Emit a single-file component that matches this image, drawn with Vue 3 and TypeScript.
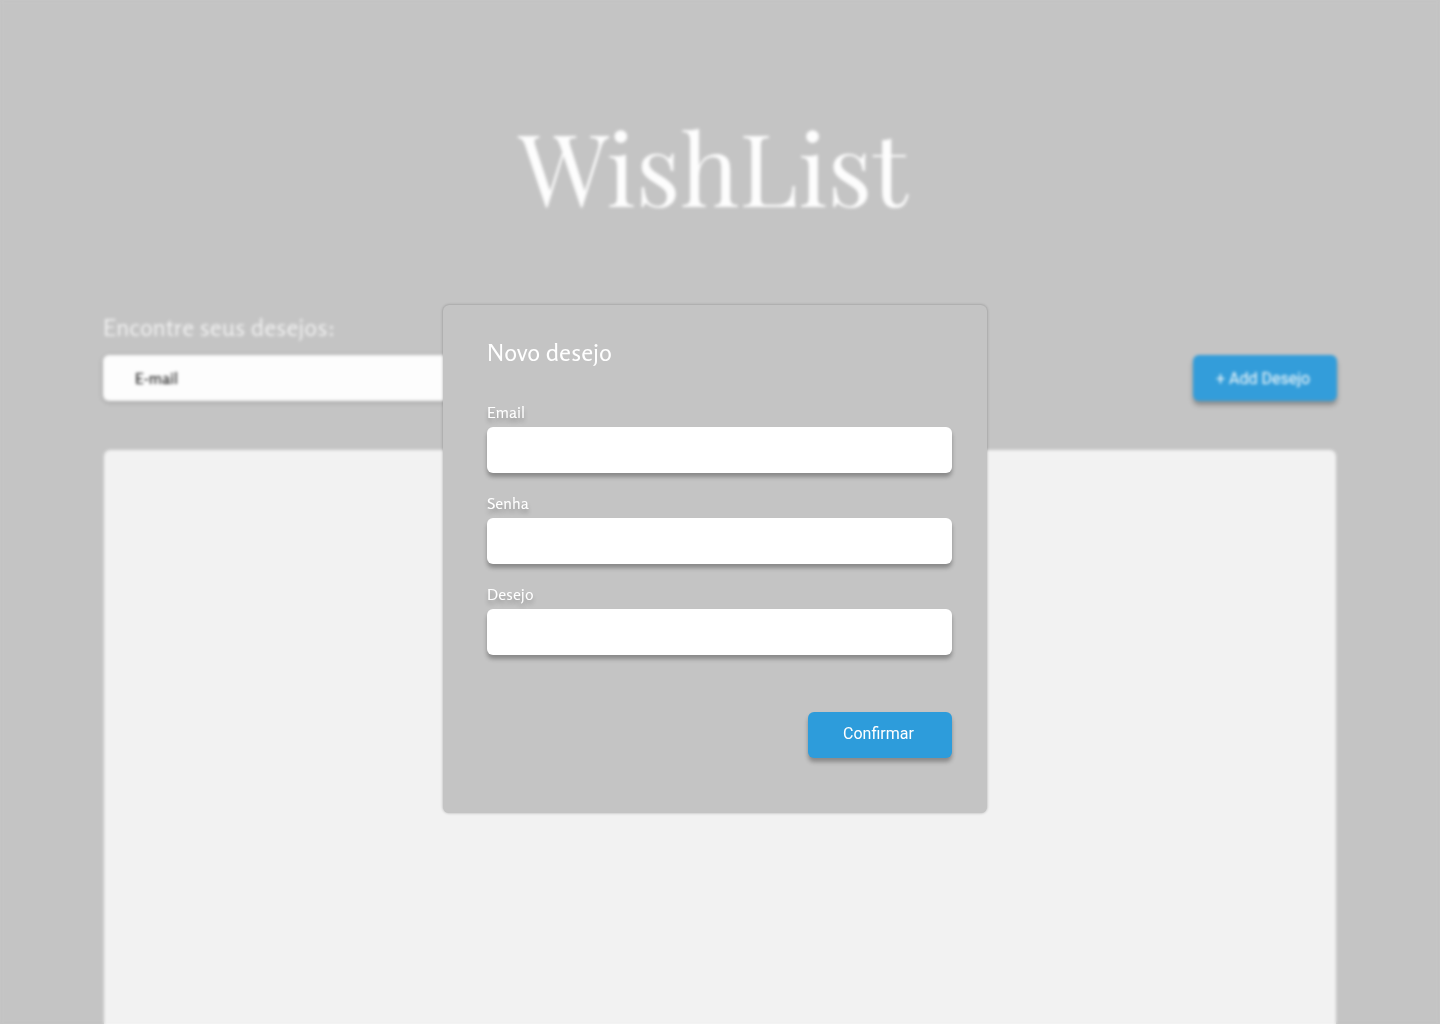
<script setup lang="ts">
import { reactive, ref } from 'vue'

interface Field {
  key: 'email' | 'password' | 'wish'
  label: string
  type: string
}

const fields: Field[] = [
  { key: 'email', label: 'Email', type: 'email' },
  { key: 'password', label: 'Senha', type: 'password' },
  { key: 'wish', label: 'Desejo', type: 'text' },
]

const search = ref('')
const form = reactive({ email: '', password: '', wish: '' })
</script>

<template>
  <div class="page">
    <h1 class="title">WishList</h1>
    <div class="toolbar">
      <div class="search">
        <label class="search-label" for="search">Encontre seus desejos:</label>
        <input id="search" v-model="search" class="search-input" type="text" placeholder="E-mail" />
      </div>
      <button class="button add" type="button">+ Add Desejo</button>
    </div>
    <main class="wishes"></main>
  </div>

  <div class="overlay">
    <form class="dialog" role="dialog" aria-labelledby="dialog-title" @submit.prevent>
      <h2 id="dialog-title" class="dialog-title">Novo desejo</h2>
      <div v-for="field in fields" :key="field.key" class="field">
        <label class="field-label" :for="field.key">{{ field.label }}</label>
        <input :id="field.key" v-model="form[field.key]" class="field-input" :type="field.type" />
      </div>
      <button class="button confirm" type="submit">Confirmar</button>
    </form>
  </div>
</template>

<style>
body {
  margin: 0;
  background: #c4c4c4;
}
</style>

<style scoped>
.page {
  display: flex;
  flex-direction: column;
  box-sizing: border-box;
  height: 100vh;
  padding: 99px 103px 0;
  background: #c4c4c4;
  font-family: Rosario, Lato, sans-serif;
}

.title {
  margin: 0 14px 0 0;
  color: #fff;
  font: 400 100px/134px 'Playfair Display', 'Liberation Serif', serif;
  text-align: center;
}

.toolbar {
  display: flex;
  align-items: flex-end;
  justify-content: space-between;
  margin-top: 79px;
}

.search {
  display: flex;
  flex-direction: column;
  gap: 11px;
  width: 465px;
}

.search-label {
  color: #f2f2f2;
  font-size: 24px;
  line-height: 32px;
}

.search-input,
.field-input {
  box-sizing: border-box;
  width: 100%;
  height: 46px;
  padding: 0 32px;
  border: 0;
  border-radius: 6px;
  outline: 0;
  background: #fff;
  color: #000;
  font: 16px/20px Rosario, Lato, sans-serif;
}

.search-input {
  box-shadow: 0 1px 4px rgba(0, 0, 0, 0.25);
}

.search-input::placeholder {
  color: #000;
  opacity: 1;
}

.button {
  width: 144px;
  height: 46px;
  border: 0;
  border-radius: 6px;
  background: #2d9cdb;
  box-shadow: 0 4px 4px rgba(0, 0, 0, 0.3);
  color: #fff;
  font: 16px/20px Roboto, sans-serif;
  cursor: pointer;
}

.add {
  padding: 2px 4px 0 0;
}

.wishes {
  flex: 1;
  margin: 49px 1px 0;
  border-radius: 6px 6px 0 0;
  background: #f4f4f4;
}

.overlay {
  position: fixed;
  inset: 0;
  display: flex;
  align-items: flex-start;
  justify-content: center;
  padding: 305px 10px 0 0;
  background: rgba(196, 196, 196, 0.04);
  backdrop-filter: blur(1px) blur(1px);
}

.dialog {
  display: flex;
  flex-direction: column;
  gap: 18px;
  box-sizing: border-box;
  width: 544px;
  padding: 32px 35px 55px 44px;
  border-radius: 6px;
  background: #c4c4c4;
  box-shadow: 0 0 3px rgba(0, 0, 0, 0.3);
  font-family: Rosario, Lato, sans-serif;
}

.dialog-title {
  margin: 0 0 14px;
  color: #fff;
  font-size: 24px;
  font-weight: 400;
  line-height: 32px;
}

.field {
  display: flex;
  flex-direction: column;
  gap: 4px;
}

.field + .field {
  margin-top: 1px;
}

.field-label {
  color: #fff;
  font-size: 16px;
  line-height: 22px;
  text-shadow: 0 4px 4px rgba(0, 0, 0, 0.25);
}

.field-input {
  box-shadow: 0 4px 4px rgba(0, 0, 0, 0.3);
}

.confirm {
  align-self: flex-end;
  margin-top: 39px;
  padding: 0 3px 2px 0;
}
</style>
